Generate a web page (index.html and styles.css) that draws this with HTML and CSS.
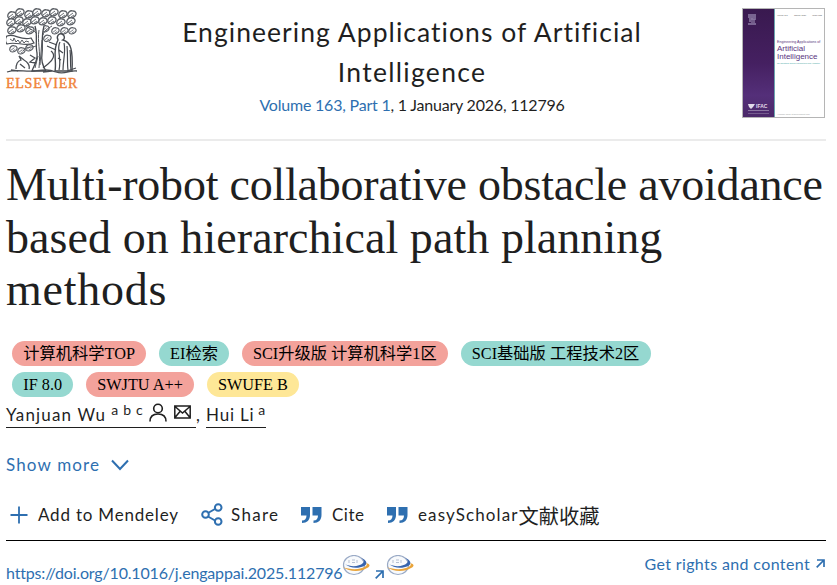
FILE: index.html
```html
<!DOCTYPE html>
<html lang="en">
<head>
  <meta charset="UTF-8" />
  <meta name="viewport" content="width=device-width, initial-scale=1.0"/>
  <title>Multi-robot collaborative obstacle avoidance</title>
  <link rel="stylesheet" href="styles.css">
</head>
<body>
  <svg class="defs" width="0" height="0" aria-hidden="true">
    <symbol id="leaf" viewBox="0 0 10 9">
      <path d="M1 6C0 3 3 0 6 1c3 0 4 3 2 5S2 9 1 6z" fill="#fff" stroke="#5a5e64" stroke-width="1.3"/>
      <path d="M2 6l4-3M4 7l3-2" stroke="#6b6f75" stroke-width="1"/>
    </symbol>
    <symbol id="quote" viewBox="0 0 21 18">
      <path d="M0 1h9v8c0 5-3 8-8 8v-2.500c3 0 4.500-2 4.500-5H0zM11.500 1h9v8c0 5-3 8-8 8v-2.500c3 0 4.500-2 4.500-5h-5.500z" fill="#2e6fb0"/>
    </symbol>
    <symbol id="arrow" viewBox="0 0 9 9">
      <path d="M1 1h7v7M8 1L.7 8.300" fill="none" stroke="#2e6fb0" stroke-width="1.700"/>
    </symbol>
    <symbol id="planet" viewBox="0 0 28 21">
      <ellipse cx="12" cy="10" rx="10.500" ry="9.500" fill="#f8fafc" stroke="#9aaac6" stroke-width="1.200"/>
      <path d="M7 5v3M10 5h3M10 7.500h3M15 5v3" stroke="#b4bfd2" stroke-width="1"/>
      <path d="M3 9c5 3 14 3 18-1 2-2 0-4-2-5 6 2 7 6 3 8-6 3-15 2-19-2z" fill="#3764ad"/>
      <path d="M1 12c7 3 18 3 23-1 1-1 1-2 0-3 4 1 5 3 1 5-6 4-18 4-24-1z" fill="#e9a43a"/>
    </symbol>
  </svg>

  <header class="journal">
    <a class="publisher">
      <svg class="tree" viewBox="0 0 72 66" fill="none">
        <g id="leaves">
          <use href="#leaf" x="1" y="3" width="10" height="9"/>
          <use href="#leaf" x="9" y="0" width="10" height="9"/>
          <use href="#leaf" x="18" y="2" width="10" height="9"/>
          <use href="#leaf" x="26" y="0" width="10" height="9"/>
          <use href="#leaf" x="35" y="1" width="10" height="9"/>
          <use href="#leaf" x="43" y="0" width="10" height="9"/>
          <use href="#leaf" x="52" y="2" width="10" height="9"/>
          <use href="#leaf" x="61" y="2" width="10" height="9"/>
          <use href="#leaf" x="0" y="10" width="10" height="9"/>
          <use href="#leaf" x="8" y="8" width="10" height="9"/>
          <use href="#leaf" x="16" y="10" width="10" height="9"/>
          <use href="#leaf" x="24" y="8" width="10" height="9"/>
          <use href="#leaf" x="32" y="9" width="10" height="9"/>
          <use href="#leaf" x="41" y="8" width="10" height="9"/>
          <use href="#leaf" x="50" y="10" width="10" height="9"/>
          <use href="#leaf" x="60" y="9" width="10" height="9"/>
          <use href="#leaf" x="1" y="18" width="10" height="9"/>
          <use href="#leaf" x="10" y="16" width="10" height="9"/>
          <use href="#leaf" x="19" y="18" width="10" height="9"/>
          <use href="#leaf" x="35" y="17" width="9" height="8"/>
          <use href="#leaf" x="45" y="19" width="9" height="8"/>
          <use href="#leaf" x="54" y="19" width="9" height="8"/>
          <use href="#leaf" x="62" y="19" width="9" height="8"/>
          <use href="#leaf" x="3" y="37" width="9" height="8"/>
          <use href="#leaf" x="11" y="39" width="9" height="8"/>
          <use href="#leaf" x="19" y="36" width="9" height="8"/>
          <use href="#leaf" x="37" y="26" width="9" height="9"/>
        </g>
        <path d="M29 18c3 10 0 17 2 27 1 8-3 12-5 18h14c-4-6-5-11-4-17 1-9-1-17 2-28" fill="#fff" stroke="#44484e" stroke-width="1.300"/>
        <path d="M33 22c-2 12 2 20 0 38M36 32l-2 25M29 60l3-12M20 18c5 4 8 4 11 8M46 18c-5 3-8 5-9 9M30 38c-5 2-10 0-13 5" stroke="#53575d" stroke-width="1"/>
        <path d="M1 28c8-3 13 5 24 2l3 5c-9 4-18-2-27 1-2-2-2-6 0-8z" fill="#fff" stroke="#4a4e54" stroke-width="1.200"/>
        <path d="M4 31l3 2 1-3 2 4 2-2 2 3 2-3 2 3 2-2 3 1" stroke="#5b5f65" stroke-width="1"/>
        <path d="M52 32c-2-4 1-7 4-6s3 5 1 6c8 2 10 10 9 31H49c2-10-3-20 3-31z" fill="#fff" stroke="#44484e" stroke-width="1.400"/>
        <path d="M54 34c-4 7 2 15-1 28M58 35c2 9-1 17-1 27M61 38c1 10 0 17 1 24M64 42c1 8 0 14 1 20M51 37l-8-3M50 42l-9-4M45 43c5 4 2 9-3 13l-5 4M53 42l4 3M52 50l3 2" stroke="#44484e" stroke-width="1.200"/>
        <path d="M24 47l5 3-5 4 6 1M10 61c0-5 2-8 5-9l-2-4 5 4c4 2 6 6 5 9M14 56l5 4M1 64c9-3 18 0 27-1s13-2 22 1 13-2 21-1M5 62l7 1M61 63l9-3M37 64l9-1" stroke="#4a4e54" stroke-width="1.300"/>
      </svg>
      <span class="publisher-name">ELSEVIER</span>
    </a>

    <div class="journal-title">
      <h2><span class="j1">Engineering Applications of Artificial</span><br><span class="j2">Intelligence</span></h2>
      <p><a>Volume 163, Part 1</a>, 1 January 2026, 112796</p>
    </div>

    <div class="cover">
      <div class="cover-side">
        <svg width="9" height="11" viewBox="0 0 9 11"><path d="M0 1h8M0 3h8M1 5h7M4 4v5M0 10h8M6 5v4M1 7h2" fill="none" stroke="#8f7da6" stroke-width="1.300"/></svg>
        <div class="ifac">
          <svg width="7" height="5" viewBox="0 0 7 5"><path d="M0 0h7L5 3 3 5 1 3z" fill="#e1dae9"/></svg>
          IFAC
        </div>
        <i></i>
      </div>
      <div class="cover-main">
        <small class="cover-issue"><span>Volume 163</span><span>January 2026</span><span>ISSN 0952</span></small>
        <small class="cover-over">Engineering Applications of</small>
        <b>Artificial</b>
        <b>Intelligence</b>
        <small class="cover-sub">The International Journal of Intelligent Real-Time Automation</small>
        <small class="cover-foot">Available online at sciencedirect.com</small>
      </div>
    </div>
  </header>

  <h1><span class="t1">Multi-robot collaborative obstacle avoidance</span><br><span class="t2">based on hierarchical path planning</span><br><span class="t3">methods</span></h1>

  <div class="tags">
    <span class="tag red">计算机科学TOP</span>
    <span class="tag teal">EI检索</span>
    <span class="tag red">SCI升级版 计算机科学1区</span>
    <span class="tag teal">SCI基础版 工程技术2区</span>
    <span class="tag teal">IF 8.0</span>
    <span class="tag red">SWJTU A++</span>
    <span class="tag yellow">SWUFE B</span>
  </div>

  <div class="authors">
    <a class="author first"><span>Yanjuan Wu</span><sup>a b c</sup>
      <svg class="person" width="18" height="19" viewBox="0 0 18 19" fill="none" stroke="#1f1f1f" stroke-width="1.600"><circle cx="9" cy="5.500" r="4.300"/><path d="M1 18.500c0-5 3-7.500 8-7.500s8 2.500 8 7.500"/></svg>
      <svg class="mail" width="17" height="14" viewBox="0 0 17 14" fill="none" stroke="#1f1f1f" stroke-width="1.500"><path d="M.8 1h15.400v12H.8zM1 1.500l7.500 6.500L16 1.500M1 12.500l5-6M16 12.500l-5-6"/></svg>
    </a><span class="comma">,</span>
    <a class="author"><span>Hui Li</span><sup>a</sup></a>
  </div>

  <button class="show-more" type="button">
    <span>Show more</span>
    <svg width="18" height="12" viewBox="0 0 18 12"><path d="M1 1.500l8 8.500 8-8.500" fill="none" stroke="#2e6fb0" stroke-width="2"/></svg>
  </button>

  <div class="actions">
    <a class="mendeley">
      <svg width="18" height="18" viewBox="0 0 18 18"><path d="M9 .5v17M.5 9h17" stroke="#2e6fb0" stroke-width="1.800"/></svg>
      <span>Add to Mendeley</span>
    </a>
    <a class="share">
      <svg width="22" height="23" viewBox="0 0 22 23" fill="none" stroke="#2e6fb0" stroke-width="2"><path d="M7 10l7-4M7 13.500l7 4"/><circle cx="4.500" cy="11.500" r="3.300"/><circle cx="17.200" cy="4.500" r="3.300"/><circle cx="17.200" cy="18.500" r="3.300"/></svg>
      <span>Share</span>
    </a>
    <a class="cite">
      <svg width="21" height="18"><use href="#quote"/></svg>
      <span>Cite</span>
    </a>
    <a class="scholar">
      <svg width="21" height="18"><use href="#quote"/></svg>
      <span>easyScholar</span><span class="zh">文献收藏</span>
    </a>
  </div>

  <footer class="links">
    <div class="doi">
      <a>https://doi.org/10.1016/j.engappai.2025.112796</a>
      <svg class="planet" width="28" height="21"><use href="#planet"/></svg>
      <svg class="out" width="9" height="9"><use href="#arrow"/></svg>
      <svg class="planet" width="28" height="21"><use href="#planet"/></svg>
    </div>
    <div class="rights">
      <a>Get rights and content</a>
      <svg width="9" height="9"><use href="#arrow"/></svg>
    </div>
  </footer>
</body>
</html>
```
FILE: styles.css
```css
* {
  box-sizing: border-box;
}
body {
  margin: 0;
  padding: 0 11px 0 6px;
  height: 585px;
  overflow: hidden;
  background: #fff;
  color: #1f1f1f;
  font-family: Lato, "Noto Sans CJK SC", sans-serif;
  font-size: 17px;
}
.defs {
  position: absolute;
}
svg {
  display: block;
  flex: none;
}
h1, h2, p {
  margin: 0;
  font-weight: 400;
}
a, .show-more {
  color: #2e6fb0;
}
.journal {
  display: flex;
  justify-content: space-between;
  height: 141px;
  padding-top: 8px;
  border-bottom: 2px solid #ebebeb;
}
.publisher {
  width: 72px;
}
.tree {
  width: 72px;
  height: 66px;
}
.publisher-name {
  display: block;
  margin-top: 2px;
  color: #f08236;
  font: 14px/16px "Liberation Serif", serif;
  letter-spacing: 0.75px;
  -webkit-text-stroke: 0.4px #f08236;
}
.journal-title {
  width: 500px;
  padding: 4px 0 0 4px;
  text-align: center;
}
h2 {
  font-size: 26.500px;
  line-height: 40px;
  white-space: nowrap;
}
.j1 {
  letter-spacing: 1.050px;
}
.j2 {
  letter-spacing: 1.300px;
}
.journal-title p {
  padding-top: 1px;
  font-size: 16px;
  line-height: 24px;
  letter-spacing: -0.21px;
}
.cover {
  display: flex;
  width: 84px;
  height: 110px;
  margin-right: 1px;
  border: 1px solid #b5b5b5;
}
.cover {
  width: 83px;
}
.cover-side {
  display: flex;
  flex-direction: column;
  width: 32px;
  padding: 5px 5px 3px;
  background: linear-gradient(#39194f, #452061 50%, #542f79 80%, #4b2969);
  border-right: 1px solid #6ba5af;
}
.ifac {
  display: flex;
  align-items: center;
  gap: 1px;
  margin-top: auto;
  color: #e1dae9;
  font: bold 5px/7px "Liberation Sans", sans-serif;
}
.cover-side i {
  height: 4px;
  border-top: 1px solid #8c77a2;
  border-bottom: 1px solid #745b8d;
}
.cover-main {
  display: flex;
  flex-direction: column;
  flex: 1;
  padding: 4px 2px 1px;
  overflow: hidden;
  color: #5b3580;
  font-family: "Liberation Sans", sans-serif;
  white-space: nowrap;
}
.cover-main small {
  font-size: 2px;
  line-height: 4px;
}
.cover-main b {
  font-size: 8px;
  font-weight: 400;
  line-height: 8px;
}
.cover-main .cover-issue {
  display: flex;
  justify-content: space-between;
  color: #555;
}
.cover-main .cover-over {
  margin-top: 22px;
  font-size: 3.6px;
  line-height: 6px;
}
.cover-main .cover-sub {
  margin-top: 1px;
  color: #2f9a9a;
  font-size: 1.6px;
}
.cover-main .cover-foot {
  margin-top: auto;
  color: #999;
}
h1 {
  margin-top: 18px;
  font: 400 46px/52.500px "Liberation Serif", serif;
  white-space: nowrap;
}
.t1 {
  letter-spacing: -0.22px;
}
.t2 {
  letter-spacing: 0.07px;
}
.t3 {
  letter-spacing: 0.75px;
}
.tags {
  display: flex;
  flex-wrap: wrap;
  gap: 6px 12.500px;
  max-width: 660px;
  margin: 24px 0 0 6px;
}
.tag {
  height: 25px;
  padding: 0 11.300px;
  border-radius: 12.500px;
  color: #000;
  font: 16.250px/27px "Liberation Serif", "Noto Sans CJK SC", serif;
  white-space: nowrap;
}
.red {
  background: #f3a29b;
}
.teal {
  background: #95d8d0;
}
.yellow {
  background: #fee797;
}
.authors {
  display: flex;
  height: 31px;
  line-height: 36px;
}
.author {
  display: flex;
  height: 31px;
  color: #1f1f1f;
  border-bottom: 1px solid #1f1f1f;
  letter-spacing: 0.8px;
}
.author.first {
  width: 190px;
  letter-spacing: 1.15px;
}
.author sup {
  margin-left: 5px;
  font-size: 14px;
  line-height: 25px;
  letter-spacing: 0.7px;
  vertical-align: baseline;
}
.author.first + .comma + .author sup {
  margin-left: 4px;
}
.person {
  margin: 6px 0 0 6px;
}
.mail {
  margin: 8px 0 0 7px;
}
.comma {
  width: 10px;
}
.show-more {
  display: flex;
  align-items: center;
  gap: 11px;
  height: 24px;
  margin-top: 25px;
  padding: 0;
  border: 0;
  background: none;
  font: 17px/24px Lato, sans-serif;
  letter-spacing: 1.15px;
}
.actions {
  display: flex;
  height: 64px;
  border-bottom: 1px solid #000;
}
.actions a {
  display: flex;
  align-items: center;
  height: 26px;
  margin-top: 25px;
  color: #1f1f1f;
}
.mendeley {
  width: 195px;
  padding-left: 4px;
  gap: 10px;
  letter-spacing: 0.8px;
}
.share {
  width: 100px;
  gap: 8px;
  letter-spacing: 1.3px;
}
.cite {
  width: 86px;
  gap: 10px;
  letter-spacing: 0.5px;
}
.scholar {
  letter-spacing: 1.1px;
}
.scholar svg {
  margin-right: 10px;
}
.scholar .zh {
  font: 20.300px/26px "Noto Sans CJK SC", sans-serif;
  letter-spacing: 0;
}
.links {
  display: flex;
  justify-content: space-between;
}
.doi {
  display: flex;
  padding-top: 14px;
  font-size: 16px;
  line-height: 36px;
  letter-spacing: -0.17px;
}
.out {
  margin: 15px 2px 0 5px;
}
.rights {
  display: flex;
  align-items: center;
  gap: 6px;
  height: 24px;
  margin: 11px 1px 0 0;
  font-size: 16px;
  letter-spacing: 0.37px;
}
```
